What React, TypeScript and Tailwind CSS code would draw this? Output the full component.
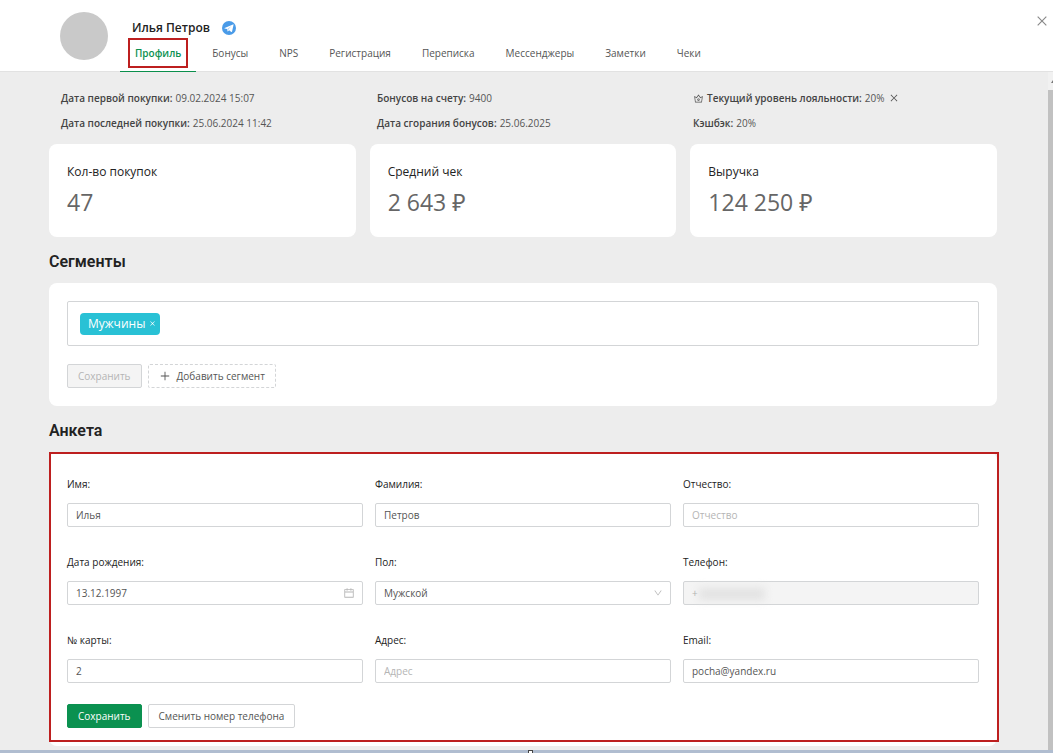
import React, { useState } from 'react';
import { AiOutlineCalendar, AiOutlineClose, AiOutlineCrown, AiOutlineDown, AiOutlinePlus } from 'react-icons/ai';

type Field = {
  id: string;
  label: string;
  value?: string;
  placeholder?: string;
  type?: 'text' | 'date' | 'select' | 'phone';
};

const tabs = ['Профиль', 'Бонусы', 'NPS', 'Регистрация', 'Переписка', 'Мессенджеры', 'Заметки', 'Чеки'];

const stats = [
  { title: 'Кол-во покупок', value: '47' },
  { title: 'Средний чек', value: '2 643 ₽' },
  { title: 'Выручка', value: '124 250 ₽' },
];

const fields: Field[] = [
  { id: 'name', label: 'Имя', value: 'Илья' },
  { id: 'surname', label: 'Фамилия', value: 'Петров' },
  { id: 'patronymic', label: 'Отчество', placeholder: 'Отчество' },
  { id: 'birthday', label: 'Дата рождения', value: '13.12.1997', type: 'date' },
  { id: 'gender', label: 'Пол', value: 'Мужской', type: 'select' },
  { id: 'phone', label: 'Телефон', value: '+', type: 'phone' },
  { id: 'card', label: '№ карты', value: '2' },
  { id: 'address', label: 'Адрес', placeholder: 'Адрес' },
  { id: 'email', label: 'Email', value: 'pocha@yandex.ru' },
];

const TelegramIcon: React.FC = () => (
  <svg viewBox="0 0 24 24" className="size-[14px]" aria-hidden="true">
    <circle cx="12" cy="12" r="12" fill="#4a9be8" />
    <path d="M4.5 11.8 18.8 5.8c.7-.2 1.1.2.9 1l-2.4 11.3c-.2.8-.8 1-1.4.6l-3.7-2.8-1.8 1.8c-.4.4-.8.3-.9-.2l-.8-3.6-4.1-1.2c-.7-.2-.7-.6-.1-.9z" fill="#fff" />
    <path d="m9.2 13.6 7-5.2-5.2 6.2-.9 2.9z" fill="#a9cdf3" />
  </svg>
);

const InfoLine: React.FC<{ label: string; children: React.ReactNode; icon?: React.ReactNode }> = ({ label, children, icon }) => (
  <p className="flex items-center gap-[3px] whitespace-nowrap">
    {icon}
    <b className="font-semibold text-[#444]">{label}:</b>
    <span>{children}</span>
  </p>
);

const FormField: React.FC<{ field: Field }> = ({ field }) => {
  const [value, setValue] = useState<string>(field.value || '');
  const control = 'block h-6 w-full rounded-xs border border-[#d3d5d7] px-2 outline-none placeholder:text-[#b5b5b5]';

  return (
    <div>
      <label htmlFor={field.id} className="mb-[10px] block h-[18px] leading-[18px] text-[#222]">
        {field.label}:
      </label>
      <div className="relative">
        {field.type === 'select' ? (
          <select id={field.id} value={value} onChange={(e) => setValue(e.target.value)} className={`${control} appearance-none bg-white`}>
            <option>Мужской</option>
            <option>Женский</option>
          </select>
        ) : field.type === 'phone' ? (
          <input id={field.id} value={value} disabled className={`${control} bg-[#f4f4f4] text-[#aaa]`} />
        ) : (
          <input
            id={field.id}
            value={value}
            placeholder={field.placeholder}
            onChange={(e) => setValue(e.target.value)}
            className={`${control} bg-white`}
          />
        )}
        {field.type === 'date' && <AiOutlineCalendar className="absolute top-[6px] right-2 size-3 text-[#b5b5b5]" />}
        {field.type === 'select' && <AiOutlineDown className="pointer-events-none absolute top-[7px] right-2 size-[10px] text-[#b5b5b5]" />}
        {field.type === 'phone' && <span className="absolute top-[7px] left-4 h-3 w-[66px] bg-[#e2e2e2] blur-xs" />}
      </div>
    </div>
  );
};

const App: React.FC = () => {
  const [activeTab, setActiveTab] = useState<string>(tabs[0]);
  const [hasSegment, setHasSegment] = useState<boolean>(true);

  return (
    <div className="flex min-h-screen flex-col bg-[#ededed] font-['Open_Sans','Noto_Sans',sans-serif] text-[10px] leading-4 text-[#555]">
      {/* Шапка */}
      <header className="flex h-[72px] border-b border-[#e2e2e2] bg-white pl-[60px]">
        <div className="mt-3 size-12 shrink-0 rounded-full bg-[#c9c9c9]" />
        <div className="ml-3 flex flex-col justify-between">
          <div className="flex items-center gap-3 pt-[18px] pl-3">
            <h1 className="text-xs leading-5 font-semibold text-[#222]">Илья Петров</h1>
            <TelegramIcon />
          </div>
          <nav className="flex gap-px">
            {tabs.map((tab) => (
              <button
                key={tab}
                onClick={() => setActiveTab(tab)}
                className={`border-b px-2 pb-[3px] ${tab === activeTab ? 'border-[#0b8f4c] font-semibold text-[#0b9150]' : 'border-transparent'}`}
              >
                <span className={`block border-2 px-[5px] py-[5px] ${tab === tabs[0] ? 'border-[#bd1f1f]' : 'border-transparent'}`}>{tab}</span>
              </button>
            ))}
          </nav>
        </div>
        <button aria-label="Закрыть" className="mt-[14px] mr-1 ml-auto size-[14px] text-[#888]">
          <AiOutlineClose className="size-[14px]" />
        </button>
      </header>

      <div className="flex grow">
        <main className="grow pr-[51px] pb-1 pl-[49px]">
          {/* Сводка */}
          <section className="-mr-3 grid grid-cols-3 gap-y-[9px] pt-[18px] pl-3">
            <InfoLine label="Дата первой покупки">09.02.2024 15:07</InfoLine>
            <InfoLine label="Бонусов на счету">9400</InfoLine>
            <div className="flex items-center gap-1">
              <InfoLine label="Текущий уровень лояльности" icon={<AiOutlineCrown className="size-[11px]" />}>20%</InfoLine>
              <button aria-label="Сбросить уровень">
                <AiOutlineClose className="size-[10px]" />
              </button>
            </div>
            <InfoLine label="Дата последней покупки">25.06.2024 11:42</InfoLine>
            <InfoLine label="Дата сгорания бонусов">25.06.2025</InfoLine>
            <InfoLine label="Кэшбэк">20%</InfoLine>
          </section>

          <section className="mt-[13px] grid grid-cols-3 gap-[14px]">
            {stats.map((stat) => (
              <div key={stat.title} className="h-[93px] rounded-lg bg-white px-[18px] pt-5">
                <p className="text-xs text-[#222]">{stat.title}</p>
                <p className="mt-[6px] text-[23px] leading-8 text-[#666]">{stat.value}</p>
              </div>
            ))}
          </section>

          {/* Сегменты */}
          <h2 className="mt-[13px] mb-[9px] font-[Roboto,sans-serif] text-base leading-6 font-semibold text-[#222]">Сегменты</h2>
          <section className="rounded-lg bg-white p-[18px]">
            <div className="flex h-[45px] items-center rounded-xs border border-[#d3d5d7] px-3">
              {hasSegment && (
                <span className="flex h-[22px] items-center gap-1 rounded-sm bg-[#29c1d5] pr-1 pl-2 text-xs text-white">
                  Мужчины
                  <button aria-label="Удалить сегмент" onClick={() => setHasSegment(false)}>
                    <AiOutlineClose className="size-[7px]" />
                  </button>
                </span>
              )}
            </div>
            <div className="mt-[18px] flex gap-[6px]">
              <button disabled className="h-6 rounded-xs border border-[#d3d5d7] bg-[#f4f4f4] px-[10px] text-[#b5b5b5]">
                Сохранить
              </button>
              <button className="flex h-6 items-center gap-[6px] rounded-xs border border-dashed border-[#d3d5d7] px-[10px]">
                <AiOutlinePlus className="size-3" />
                Добавить сегмент
              </button>
            </div>
          </section>

          {/* Анкета */}
          <h2 className="mt-[13px] mb-[9px] font-[Roboto,sans-serif] text-base leading-6 font-semibold text-[#222]">Анкета</h2>
          <form className="relative rounded-lg bg-white px-[18px] pt-[23px] pb-[18px]" onSubmit={(e) => e.preventDefault()}>
            <div className="pointer-events-none absolute top-0 -right-[2px] bottom-1 left-0 border-2 border-[#bd1f1f]" />
            <div className="grid grid-cols-3 gap-x-3 gap-y-[26px]">
              {fields.map((field) => (
                <FormField key={field.id} field={field} />
              ))}
            </div>
            <div className="mt-[21px] flex gap-[6px]">
              <button type="submit" className="h-6 rounded-xs border border-[#0b9150] bg-[#0b9150] px-[10px] text-white">
                Сохранить
              </button>
              <button type="button" className="h-6 rounded-xs border border-[#d3d5d7] px-[10px]">
                Сменить номер телефона
              </button>
            </div>
          </form>
        </main>

        {/* Полоса прокрутки */}
        <div className="flex w-[5px] flex-col bg-[#f1f1f1]">
          <div className="flex h-[18px] items-center justify-end overflow-hidden">
            <svg viewBox="0 0 2 3" className="h-[3px] w-[2px]" aria-hidden="true">
              <path d="M0 3 2 0v3z" fill="#777" />
            </svg>
          </div>
          <div className="grow bg-[#c1c1c1]" />
        </div>
      </div>

      <footer className="flex h-[3px] justify-center bg-[#b0bdd0] pl-2">
        <span className="w-[5px] border border-b-0 border-[#444] bg-white" />
      </footer>
    </div>
  );
};

export default App;
